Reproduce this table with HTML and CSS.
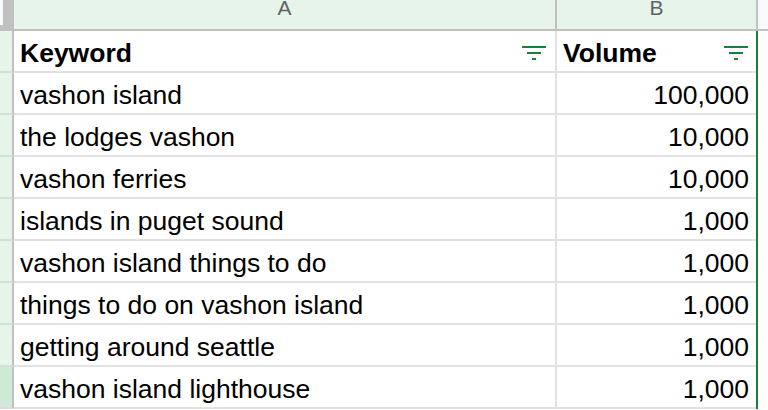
FILE: index.html
```html
<!DOCTYPE html>
<html>
<head>
<meta charset="utf-8">
<link rel="stylesheet" href="styles.css">
</head>
<body>
<div class="sheet">
  <div class="corner"><span class="corner-box"></span></div>
  <div class="colhead colhead-a">A</div>
  <div class="colhead colhead-b">B</div>
  <div class="colhead-rest"></div>

  <div class="rowhead"></div>
  <div class="cell cell-a head-cell"><span>Keyword</span><svg class="filter filter-a" width="24" height="14" viewBox="0 0 24 14"><rect x="0" y="0" width="24" height="2"/><rect x="5" y="6" width="14" height="2"/><rect x="10" y="12" width="4" height="2"/></svg></div>
  <div class="cell cell-b head-cell"><span>Volume</span><svg class="filter filter-b" width="24" height="14" viewBox="0 0 24 14"><rect x="0" y="0" width="24" height="2"/><rect x="5" y="6" width="14" height="2"/><rect x="10" y="12" width="4" height="2"/></svg></div>
  <div class="cell-rest"></div>

  <div class="rowhead"></div>
  <div class="cell cell-a">vashon island</div>
  <div class="cell cell-b num">100,000</div>
  <div class="cell-rest"></div>

  <div class="rowhead"></div>
  <div class="cell cell-a">the lodges vashon</div>
  <div class="cell cell-b num">10,000</div>
  <div class="cell-rest"></div>

  <div class="rowhead"></div>
  <div class="cell cell-a">vashon ferries</div>
  <div class="cell cell-b num">10,000</div>
  <div class="cell-rest"></div>

  <div class="rowhead"></div>
  <div class="cell cell-a">islands in puget sound</div>
  <div class="cell cell-b num">1,000</div>
  <div class="cell-rest"></div>

  <div class="rowhead"></div>
  <div class="cell cell-a">vashon island things to do</div>
  <div class="cell cell-b num">1,000</div>
  <div class="cell-rest"></div>

  <div class="rowhead"></div>
  <div class="cell cell-a">things to do on vashon island</div>
  <div class="cell cell-b num">1,000</div>
  <div class="cell-rest"></div>

  <div class="rowhead"></div>
  <div class="cell cell-a">getting around seattle</div>
  <div class="cell cell-b num">1,000</div>
  <div class="cell-rest"></div>

  <div class="rowhead rowhead-selected"></div>
  <div class="cell cell-a">vashon island lighthouse</div>
  <div class="cell cell-b num">1,000</div>
  <div class="cell-rest"></div>
</div>
</body>
</html>
```
FILE: styles.css
```css
* { box-sizing: border-box; }
html, body { margin: 0; padding: 0; background: #fff; overflow: hidden; }

.sheet {
  display: grid;
  grid-template-columns: 14px 543px 199px 12px;
  grid-template-rows: 31px repeat(9, 42px);
  width: 768px;
  height: 410px;
  overflow: hidden;
}

.corner {
  background: #c0c0c0;
}
.corner-box {
  display: block;
  width: 3px;
  height: 25px;
  background: #f8f9fa;
}

.colhead {
  background: #e6f4ea;
  border-bottom: 2px solid #c0c0c0;
  display: flex;
  justify-content: center;
  align-items: flex-start;
  font-family: "Liberation Sans", Arial, sans-serif;
  font-size: 21px;
  line-height: 16px;
  color: #5f6368;
}
.colhead-a { border-right: 2px solid #c0c0c0; }
.colhead-rest {
  background: #f8f9fa;
  border-bottom: 2px solid #c0c0c0;
  border-left: 2px solid #c0c0c0;
}

.rowhead {
  background: #e6f4ea;
  border-right: 2px solid #c0c0c0;
  border-bottom: 2px solid #d6dcd8;
}
.rowhead-selected { background: #ceead6; }

.cell {
  display: flex;
  border-bottom: 2px solid #e2e2e2;
  font-family: "Liberation Sans", Arial, sans-serif;
  font-size: 26.5px;
  line-height: 30px;
  color: #000;
  padding: 7px 7px 0 6px;
  white-space: nowrap;
  overflow: hidden;
}
.cell-a { border-right: 2px solid #e2e2e2; }
.num { justify-content: flex-end; }
.head-cell {
  font-weight: bold;
  justify-content: space-between;
  align-items: flex-start;
}

.filter {
  flex: none;
  margin-top: 8px;
  fill: #188038;
}
.filter-a { margin-right: 2px; }
.filter-b { margin-right: 1px; }

.cell-rest {
  background: #fff;
  border-left: 2px solid #188038;
}
```
